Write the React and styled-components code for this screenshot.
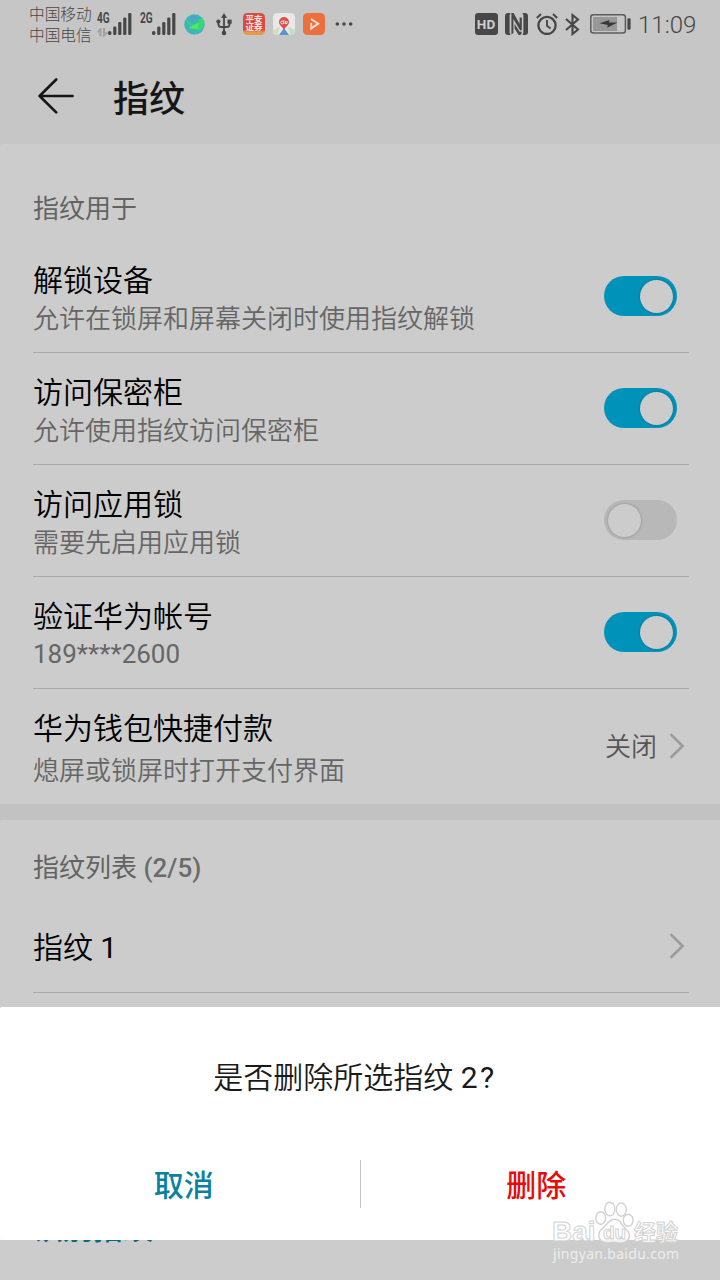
import { useState } from "react";
import styled, { createGlobalStyle } from "styled-components";

const settings = [
    { id: "unlock", title: "解锁设备", text: "允许在锁屏和屏幕关闭时使用指纹解锁", on: true },
    { id: "safe", title: "访问保密柜", text: "允许使用指纹访问保密柜", on: true },
    { id: "applock", title: "访问应用锁", text: "需要先启用应用锁", on: false, disabled: true },
    { id: "account", title: "验证华为帐号", text: "189****2600", on: true, digits: true },
];

const Signal = () => (
    <svg width="24" height="23" viewBox="0 0 24 23" fill="#474747">
        <rect x="0" y="18" width="3.4" height="4" rx="1.5" />
        <rect x="5.2" y="13.5" width="3.2" height="8.5" rx="1.2" />
        <rect x="10.2" y="9" width="3.2" height="13" rx="1.2" />
        <rect x="15.2" y="4.5" width="3.2" height="17.5" rx="1.2" />
        <rect x="20.2" y="0" width="3.2" height="22" rx="1.2" />
    </svg>
);

const DataArrows = () => (
    <svg width="11" height="9" viewBox="0 0 11 9" fill="none" stroke="#a0a0a0" strokeWidth="2">
        <path d="M0.6 4.2 L3.5 1.2 V8.5" />
        <path d="M7 0 V7.2 L10.2 4.2" />
    </svg>
);

const Globe = () => (
    <svg width="21" height="21" viewBox="0 0 21 21">
        <circle cx="10.5" cy="10.5" r="10.2" fill="#3eb4bd" />
        <path d="M2.5 6 L8.5 11 L13.5 8.5 L17.5 3 C20.5 6 20.8 9.8 19.2 13 L16 16.5 L11.5 15.5 L4.5 14.5 L7.5 11.5 L1.6 7.5 Z" fill="#35d873" />
        <path d="M8 12 L15 9 L13 15 L5 14 Z" fill="#55e957" />
        <path d="M5.5 3 Q10 1 14 3.5 L9 7.5 Z" fill="#4aa5c7" />
    </svg>
);

const Usb = () => (
    <svg width="16" height="23" viewBox="0 0 16 23" fill="none" stroke="#474747" strokeWidth="1.8">
        <path d="M8 3 V20 M2.4 8 V11 Q2.4 14 5 14 H11 Q13.5 14 13.5 11 V8" />
        <path d="M8 0 L11 5 H5 Z" fill="#474747" stroke="none" />
        <circle cx="2.4" cy="8.6" r="2.1" fill="#474747" stroke="none" />
        <rect x="11.5" y="6.6" width="4.1" height="4.1" fill="#474747" stroke="none" />
        <circle cx="8" cy="20" r="2.3" fill="#474747" stroke="none" />
    </svg>
);

const MapPin = () => (
    <svg width="22" height="22" viewBox="0 0 22 22">
        <rect width="22" height="22" rx="4.5" fill="#e8e8e8" />
        <path d="M0 17 L7 14 L5 22 H3 Q0 21 0 18 Z" fill="#d5dfbd" />
        <path d="M22 17 L15 14 L17 22 H19 Q22 21 22 18 Z" fill="#c8dcc0" />
        <path d="M11 15 L16 22 H6 Z" fill="#5b93d6" />
        <path d="M11 17 C10 14 6 12.5 6 9 A5 5 0 0 1 16 9 C16 12.5 12 14 11 17 Z" fill="#de4f4c" />
        <g fill="none" stroke="#f6e5e5" strokeWidth="1">
            <circle cx="9.2" cy="9.5" r="1.4" />
            <path d="M10.8 7 V11 M12.5 8 V10.6 H14 V8" />
        </g>
    </svg>
);

const Player = () => (
    <svg width="22" height="22" viewBox="0 0 22 22">
        <rect width="22" height="22" rx="4.5" fill="#ea713d" />
        <path d="M8 6 L15.2 10.7 L8.2 15.4 V10" fill="none" stroke="#f5dfd4" strokeWidth="1.9" />
    </svg>
);

const Dots = () => (
    <svg width="18" height="4" viewBox="0 0 18 4" fill="#474747">
        <circle cx="2.3" cy="2" r="1.8" />
        <circle cx="9" cy="2" r="1.8" />
        <circle cx="15.7" cy="2" r="1.8" />
    </svg>
);

const Nfc = () => (
    <svg width="23" height="22" viewBox="0 0 23 22" fill="#474747">
        <path d="M3.2 0 H5.6 L4.6 2 V20 L5.6 22 H3.2 Q0 22 0 19 V3 Q0 0 3.2 0 Z" />
        <path d="M19.8 0 H17.4 L18.4 2 V20 L17.4 22 H19.8 Q23 22 23 19 V3 Q23 0 19.8 0 Z" />
        <path d="M6.4 0 H8.6 L14.6 11 V4.5 H16.8 V17 L15.2 17.5 L8.4 6 V20 L6.4 21.5 Z" />
        <path d="M9.6 11 L14.8 19 L16.6 18.5 V20.5 L15.2 22 H13.6 L9.6 15.5 Z" />
    </svg>
);

const Alarm = () => (
    <svg width="22" height="22" viewBox="0 0 22 22" fill="none" stroke="#474747" strokeWidth="2.3">
        <circle cx="11" cy="12.4" r="8.6" />
        <path d="M11 7 V12.7 L14.5 15.5" strokeWidth="1.9" />
        <path d="M0.8 5 L5 1 M17 1 L21.2 5" strokeWidth="2" />
    </svg>
);

const Bluetooth = () => (
    <svg width="15" height="23" viewBox="0 0 15 23" fill="none" stroke="#474747" strokeWidth="2.1">
        <path d="M1 6 L13 16.5 L7.5 21 V2 L13 6.5 L1 17" />
    </svg>
);

const Battery = () => (
    <svg width="41" height="20" viewBox="0 0 41 20">
        <rect x="0.8" y="0.8" width="34.6" height="18.2" rx="2.5" fill="none" stroke="#5c5c5c" strokeWidth="1.5" />
        <rect x="3" y="3" width="24" height="14" fill="#989898" />
        <path d="M9.5 9.2 L19.5 6 L18.9 8.6 H27.5 L17.2 13.8 L17.8 11 Z" fill="#383838" />
        <rect x="37.4" y="4.2" width="3.2" height="11.6" rx="1.2" fill="#474747" />
    </svg>
);

const BackArrow = () => (
    <svg width="36" height="36" viewBox="0 0 36 36" fill="none" stroke="#161616" strokeWidth="2.6" strokeLinecap="round" strokeLinejoin="round">
        <path d="M18.2 1.5 L1.6 18 L18.2 34.4 M1.6 18 H34.6" />
    </svg>
);

const Chevron = () => (
    <svg width="16" height="26" viewBox="0 0 16 26" fill="none" stroke="#9c9c9c" strokeWidth="2.6" strokeLinecap="round">
        <path d="M2.4 2 L13.6 13 L2.4 24" />
    </svg>
);

const Paw = () => (
    <svg width="40" height="43" viewBox="0 0 40 43" fill="#fff" fillOpacity="0.75" stroke="#d2d2d2" strokeWidth="1.4">
        <ellipse cx="6.7" cy="17" rx="4.9" ry="6.3" />
        <ellipse cx="15.8" cy="8" rx="5" ry="6.8" />
        <ellipse cx="27.3" cy="8.6" rx="5" ry="6.6" />
        <ellipse cx="34.2" cy="19.2" rx="4.9" ry="6" />
        <path d="M20.5 18.2 C15 18.2 13 24 8.5 27.4 C2.5 32 4.5 41.5 12 41.6 C17 41.7 19 40.6 24 41.6 C31 43 36.5 39 35.2 33 C34 28.5 29.5 26.6 27.4 22.6 C26 19.6 24 18.2 20.5 18.2 Z" />
    </svg>
);

const App = () => {
    const [values, setValues] = useState(settings.map((item) => item.on));

    // flip one of the switches
    const handleToggle = (index) => {
        setValues(values.map((value, i) => (i === index ? !value : value)));
    };

    return (
        <>
            <GlobalStyle />
            <Screen>
                <StatusBar>
                    <Carriers>
                        <div>中国移动</div>
                        <div>中国电信</div>
                    </Carriers>
                    <Network>
                        <NetworkType>4G</NetworkType>
                        <DataArrows />
                    </Network>
                    <Signal />
                    <Network $second>
                        <NetworkType>2G</NetworkType>
                    </Network>
                    <Signal />
                    <Notifications>
                        <Globe />
                        <Usb />
                        <StockApp>
                            <div>平安</div>
                            <div>证券</div>
                        </StockApp>
                        <MapPin />
                        <Player />
                        <Dots />
                    </Notifications>
                    <DeviceState>
                        <Hd>HD</Hd>
                        <Nfc />
                        <Alarm />
                        <Bluetooth />
                        <Battery />
                        <Clock>11:09</Clock>
                    </DeviceState>
                </StatusBar>
                <Header>
                    <BackButton aria-label="返回"><BackArrow /></BackButton>
                    <PageTitle>指纹</PageTitle>
                </Header>
                <Panel>
                    <SectionLabel>指纹用于</SectionLabel>
                    {settings.map((item, index) => (
                        <Row key={item.id}>
                            <RowText>
                                <RowTitle>{item.title}</RowTitle>
                                <RowDetail $digits={item.digits}>{item.text}</RowDetail>
                            </RowText>
                            <Toggle
                                role="switch"
                                aria-checked={values[index]}
                                aria-label={item.title}
                                disabled={item.disabled}
                                $on={values[index]}
                                onClick={() => handleToggle(index)}
                            >
                                <Knob />
                            </Toggle>
                        </Row>
                    ))}
                    <Row $last>
                        <RowText>
                            <RowTitle>华为钱包快捷付款</RowTitle>
                            <RowDetail $spaced>熄屏或锁屏时打开支付界面</RowDetail>
                        </RowText>
                        <RowEnd $raised>
                            <RowValue>关闭</RowValue>
                            <Chevron />
                        </RowEnd>
                    </Row>
                </Panel>
                <Panel>
                    <SectionLabel $list>指纹列表 <Count>(2/5)</Count></SectionLabel>
                    <FingerRow>
                        <FingerName>指纹 <Digit>1</Digit></FingerName>
                        <RowEnd><Chevron /></RowEnd>
                    </FingerRow>
                    <FingerRow>
                        <FingerName>指纹 <Digit>2</Digit></FingerName>
                        <RowEnd><Chevron /></RowEnd>
                    </FingerRow>
                    <Identify>识别指纹</Identify>
                </Panel>
                <Dialog role="dialog">
                    <Question>是否删除所选指纹 <Digit $wide>2?</Digit></Question>
                    <Actions>
                        <Action>取消</Action>
                        <Separator />
                        <Action $danger>删除</Action>
                    </Actions>
                </Dialog>
                <Watermark>
                    <Brand>
                        <Latin>Bai</Latin>
                        <PawBox>
                            <Paw />
                            <Du>du</Du>
                        </PawBox>
                        <Hanzi>经验</Hanzi>
                    </Brand>
                    <Address>jingyan.baidu.com</Address>
                </Watermark>
            </Screen>
        </>
    );
};

const GlobalStyle = createGlobalStyle`
    * {
        box-sizing: border-box;
    }
    body {
        margin: 0;
        font-family: Roboto, "Noto Sans CJK SC", sans-serif;
    }
    button {
        border: none;
        padding: 0;
        background: none;
        font-family: inherit;
        cursor: pointer;
    }
    svg {
        display: block;
        flex-shrink: 0;
    }
`;
const Screen = styled.div`
    position: relative;
    width: 720px;
    height: 1280px;
    overflow: hidden;
    background-color: #c2c2c2;
`;
const StatusBar = styled.div`
    display: flex;
    align-items: center;
    height: 48px;
    padding: 0 24px 0 29px;
    background-color: #c6c6c6;
    color: #474747;
`;
const Carriers = styled.div`
    width: 68px;
    padding-top: 2px;
    font-size: 15.7px;
    font-weight: 300;
    line-height: 21.5px;
    white-space: nowrap;
`;
const Network = styled.div`
    display: flex;
    flex-direction: column;
    gap: 4px;
    width: ${(props) => (props.$second ? "20px" : "11px")};
    padding-left: ${(props) => (props.$second ? "8px" : "0")};
    height: 23px;
`;
const NetworkType = styled.div`
    height: 11px;
    font-size: 14px;
    font-weight: 700;
    line-height: 11px;
    transform: scaleX(0.72);
    transform-origin: left;
`;
const Notifications = styled.div`
    display: flex;
    align-items: center;
    gap: 8px;
    margin-left: 8px;

    > :nth-child(2) {
        margin: 0 3px;
    }

    > :last-child {
        margin-left: 2px;
    }
`;
const StockApp = styled.div`
    display: flex;
    flex-direction: column;
    align-items: center;
    width: 22px;
    height: 22px;
    padding-top: 2px;
    border-radius: 4.5px;
    background: linear-gradient(#d94c45 78%, #e89b43 86%);
    color: #f5e4e0;
    font-size: 8.5px;
    font-weight: 700;
    line-height: 8px;
    white-space: nowrap;
`;
const DeviceState = styled.div`
    display: flex;
    align-items: center;
    gap: 7.5px;
    margin-left: auto;

    > :nth-child(5) {
        margin-left: 2px;
    }
`;
const Hd = styled.div`
    width: 23px;
    height: 22px;
    border-radius: 3px;
    background-color: #474747;
    color: #d0d0d0;
    font-size: 13.5px;
    font-weight: 700;
    line-height: 22px;
    text-align: center;
`;
const Clock = styled.div`
    width: 58px;
    padding-top: 2px;
    font-size: 24px;
    font-weight: 350;
    line-height: 30px;
    white-space: nowrap;
`;
const Header = styled.div`
    display: flex;
    align-items: center;
    height: 96px;
    padding-left: 38px;
    background-color: #c6c6c6;
`;
const BackButton = styled.button`
    width: 36px;
    height: 36px;
`;
const PageTitle = styled.div`
    margin-left: 39px;
    padding-top: 7px;
    color: #161616;
    font-size: 36px;
    font-weight: 500;
    line-height: 48px;
`;
const Panel = styled.div`
    margin-bottom: 16px;
    padding: 0 31px 0 33px;
    border-radius: 2px 0 0 0;
    background-color: #ccc;

    &:first-of-type {
        margin-top: 0;
    }
`;
const SectionLabel = styled.div`
    height: ${(props) => (props.$list ? "80px" : "97px")};
    padding-top: ${(props) => (props.$list ? "28px" : "45px")};
    color: #636363;
    font-size: 26px;
    font-weight: 400;
    line-height: 40px;
`;
const Count = styled.span`
    font-weight: 500;
    color: #6b6b6b;
`;
const Row = styled.div`
    display: flex;
    justify-content: space-between;
    height: ${(props) => (props.$last ? "115px" : "112px")};
    padding-top: 20px;
    border-bottom: ${(props) => (props.$last ? "none" : "1px solid #aaa")};
`;
const RowText = styled.div`
    display: flex;
    flex-direction: column;
`;
const RowTitle = styled.div`
    color: #000;
    font-size: 30px;
    font-weight: 350;
    line-height: 40px;
`;
const RowDetail = styled.div`
    margin-top: ${(props) => (props.$spaced ? "4px" : props.$digits ? "-1px" : "0")};
    color: #666;
    font-size: 26px;
    font-weight: ${(props) => (props.$digits ? "400" : "350")};
    line-height: 36px;
`;
const Toggle = styled.button`
    display: flex;
    align-items: center;
    justify-content: ${(props) => (props.$on ? "flex-end" : "flex-start")};
    width: 73px;
    height: 40px;
    margin: 15px 12px 0 0;
    padding: 0 4px;
    border-radius: 20px;
    background-color: ${(props) => (props.$on ? "#0093b9" : "#b8b8b8")};
`;
const Knob = styled.div`
    width: 33px;
    height: 33px;
    border-radius: 50%;
    background-color: #ccc;
    box-shadow: 0 0 3px rgba(0, 0, 0, 0.25);
`;
const RowEnd = styled.div`
    display: flex;
    align-items: center;
    gap: 12px;
    padding: ${(props) => (props.$raised ? "0 4px 21px 0" : "0 4px 0 0")};
`;
const RowValue = styled.div`
    padding-top: 2px;
    color: #555;
    font-size: 26px;
    font-weight: 350;
    line-height: 36px;
`;
const FingerRow = styled.div`
    display: flex;
    align-items: center;
    justify-content: space-between;
    height: 93px;
    border-bottom: 1px solid #aaa;
`;
const FingerName = styled(RowTitle)`
    padding-top: 3px;
`;
const Digit = styled.span`
    font-weight: 400;
    letter-spacing: ${(props) => (props.$wide ? "2.5px" : "0")};
`;
const Identify = styled.div`
    height: 240px;
    padding-top: 123px;
    color: #086a80;
    font-size: 30px;
    font-weight: 500;
    line-height: 40px;
`;
const Dialog = styled.div`
    position: absolute;
    left: 0;
    top: 1007px;
    width: 100%;
    height: 233px;
    padding-top: 51px;
    border-radius: 2px 0 0 1px;
    background-color: #fff;
`;
const Question = styled.div`
    padding-right: 10px;
    color: #1a1a1a;
    font-size: 30px;
    font-weight: 350;
    line-height: 40px;
    text-align: center;
`;
const Actions = styled.div`
    display: flex;
    align-items: center;
    margin-top: 62px;
    padding: 0 8px;
`;
const Action = styled.button`
    flex: 1;
    padding-top: 3px;
    color: ${(props) => (props.$danger ? "#e90a0a" : "#0a829f")};
    font-size: 30px;
    font-weight: 500;
    line-height: 45px;
`;
const Separator = styled.div`
    width: 1px;
    height: 48px;
    background-color: #c4c4c4;
`;
const Watermark = styled.div`
    position: absolute;
    left: 552px;
    top: 1201px;
    width: 130px;
    pointer-events: none;
`;
const Brand = styled.div`
    display: flex;
    align-items: flex-end;
    height: 43px;
    color: rgba(255, 255, 255, 0.75);
    -webkit-text-stroke: 1px #d2d2d2;
    white-space: nowrap;
`;
const Latin = styled.div`
    width: 42px;
    font-family: "Liberation Sans", sans-serif;
    font-size: 28px;
    font-weight: 700;
    line-height: 24px;
`;
const PawBox = styled.div`
    display: grid;
    width: 40px;

    > * {
        grid-area: 1 / 1;
    }
`;
const Du = styled.div`
    align-self: end;
    padding: 0 0 2px 9px;
    font-family: "Liberation Sans", sans-serif;
    font-size: 19px;
    font-weight: 700;
    line-height: 18px;
`;
const Hanzi = styled.div`
    font-size: 22px;
    font-weight: 700;
    line-height: 23px;
`;
const Address = styled.div`
    margin-top: 1px;
    padding-left: 1px;
    color: #ededed;
    font-family: "Noto Sans", sans-serif;
    font-size: 14px;
    line-height: 18px;
    letter-spacing: 0.3px;
    white-space: nowrap;
`;

export default App;
